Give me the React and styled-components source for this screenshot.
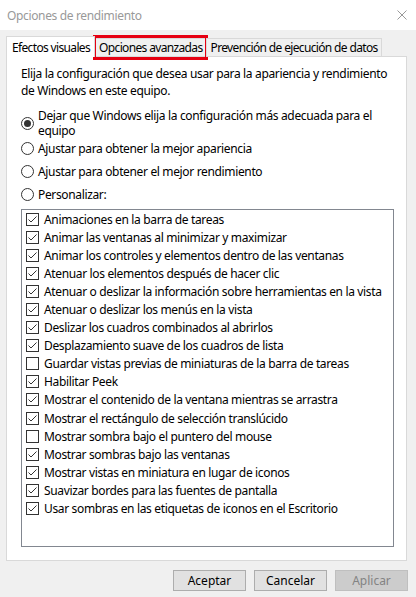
import React from 'react';
import styled, { createGlobalStyle } from 'styled-components';

const GlobalStyle = createGlobalStyle`
  html, body {
    margin: 0;
    padding: 0;
    background: #f0f0f0;
  }
  body {
    font-family: "Noto Sans", "Liberation Sans", sans-serif;
    font-size: 12px;
    letter-spacing: -0.35px;
    color: #000;
  }
`;

const Window = styled.div`
  width: 416px;
  height: 597px;
  display: flex;
  flex-direction: column;
  background: #f0f0f0;
  overflow: hidden;
`;

const TitleBar = styled.div`
  height: 30px;
  background: #fff;
  display: flex;
  align-items: center;
  justify-content: space-between;
  padding: 0 2px 0 7px;
  color: #999;
  font-size: 12px;
`;

const Close = styled.div`
  width: 24px;
  display: flex;
  justify-content: center;
`;

const Body = styled.div`
  padding: 7px 9px 0 6px;
  display: flex;
  flex-direction: column;
`;

const TabRow = styled.div`
  display: flex;
  align-items: flex-end;
  height: 20px;
  margin-bottom: -1px;
  position: relative;
  z-index: 1;
`;

const Tab = styled.div`
  position: relative;
  box-sizing: border-box;
  height: ${({ $active }) => ($active ? '21px' : '19px')};
  padding: ${({ $active }) => ($active ? '0 4px 0 5px' : '0 3px 0 4px')};
  background: ${({ $active }) => ($active ? '#fff' : '#f0f0f0')};
  border: 1px solid #d9d9d9;
  border-bottom: ${({ $active }) => ($active ? 'none' : '1px solid #d9d9d9')};
  margin-left: ${({ $active }) => ($active ? '0' : '-1px')};
  display: flex;
  align-items: center;
  white-space: nowrap;
  letter-spacing: -0.65px;
  z-index: ${({ $active }) => ($active ? 2 : 1)};
  ${({ $marked }) =>
    $marked &&
    `
    &::after {
      content: '';
      position: absolute;
      left: -2px;
      right: -2px;
      top: -4px;
      bottom: -4px;
      border: 3px solid #e60012;
      z-index: 3;
    }
  `}
`;

const Panel = styled.div`
  box-sizing: border-box;
  width: 401px;
  height: 505px;
  background: #fff;
  border: 1px solid #d9d9d9;
  padding: 8px 13px 0 14px;
  display: flex;
  flex-direction: column;
`;

const Intro = styled.p`
  margin: 0;
  line-height: 17px;
`;

const RadioGroup = styled.div`
  display: flex;
  flex-direction: column;
  margin-top: 9px;
`;

const RadioRow = styled.label`
  display: flex;
  align-items: center;
  line-height: 15px;
  white-space: pre-line;
  margin-top: ${({ $space }) => $space}px;
`;

const RadioCircle = styled.span`
  flex: none;
  box-sizing: border-box;
  width: 13px;
  height: 13px;
  border-radius: 50%;
  border: 1px solid #333;
  margin-right: 4px;
  display: flex;
  align-items: center;
  justify-content: center;
  &::after {
    content: '';
    display: ${({ $checked }) => ($checked ? 'block' : 'none')};
    width: 7px;
    height: 7px;
    border-radius: 50%;
    background: #333;
  }
`;

const ListBox = styled.div`
  box-sizing: border-box;
  margin-top: 7px;
  width: 373px;
  height: 338px;
  border: 1px solid #828790;
  padding: 0 4px;
  display: flex;
  flex-direction: column;
`;

const CheckRow = styled.div`
  display: flex;
  align-items: center;
  height: 18.1px;
  white-space: nowrap;
`;

const Box = styled.span`
  flex: none;
  box-sizing: border-box;
  width: 13px;
  height: 13px;
  border: 1px solid #333;
  margin-right: 5px;
  display: flex;
  align-items: center;
  justify-content: center;
`;

const Footer = styled.div`
  display: flex;
  justify-content: flex-end;
  gap: 8px;
  padding-top: 9px;
  margin-right: -1px;
`;

const Button = styled.button`
  box-sizing: border-box;
  width: 73px;
  height: 21px;
  font: inherit;
  font-size: 12px;
  padding: 0;
  background: ${({ disabled }) => (disabled ? '#cccccc' : '#e1e1e1')};
  border: 1px solid ${({ disabled }) => (disabled ? '#bfbfbf' : '#adadad')};
  color: ${({ disabled }) => (disabled ? '#838383' : '#000')};
`;

const options = [
  ['Animaciones en la barra de tareas', true],
  ['Animar las ventanas al minimizar y maximizar', true],
  ['Animar los controles y elementos dentro de las ventanas', true],
  ['Atenuar los elementos después de hacer clic', true],
  ['Atenuar o deslizar la información sobre herramientas en la vista', true],
  ['Atenuar o deslizar los menús en la vista', true],
  ['Deslizar los cuadros combinados al abrirlos', true],
  ['Desplazamiento suave de los cuadros de lista', true],
  ['Guardar vistas previas de miniaturas de la barra de tareas', false],
  ['Habilitar Peek', true],
  ['Mostrar el contenido de la ventana mientras se arrastra', true],
  ['Mostrar el rectángulo de selección translúcido', true],
  ['Mostrar sombra bajo el puntero del mouse', false],
  ['Mostrar sombras bajo las ventanas', true],
  ['Mostrar vistas en miniatura en lugar de iconos', true],
  ['Suavizar bordes para las fuentes de pantalla', true],
  ['Usar sombras en las etiquetas de iconos en el Escritorio', true],
];

const radios = [
  ['Dejar que Windows elija la configuración más adecuada para el\nequipo', true, 0],
  ['Ajustar para obtener la mejor apariencia', false, 3],
  ['Ajustar para obtener el mejor rendimiento', false, 8],
  ['Personalizar:', false, 8],
];

const Check = ({ checked }) => (
  <Box>
    {checked && (
      <svg width="11" height="11" viewBox="0 0 11 11">
        <path d="M1.5 5.5 L4 8 L9.5 2.5" fill="none" stroke="#333" strokeWidth="1" />
      </svg>
    )}
  </Box>
);

export default function App() {
  return (
    <Window>
      <GlobalStyle />
      <TitleBar>
        <span>Opciones de rendimiento</span>
        <Close>
          <svg width="10" height="10" viewBox="0 0 10 10">
            <path d="M0.5 0.5 L9.5 9.5 M9.5 0.5 L0.5 9.5" stroke="#999" strokeWidth="1" />
          </svg>
        </Close>
      </TitleBar>
      <Body>
        <TabRow>
          <Tab $active>Efectos visuales</Tab>
          <Tab $marked>Opciones avanzadas</Tab>
          <Tab>Prevención de ejecución de datos</Tab>
        </TabRow>
        <Panel>
          <Intro>
            Elija la configuración que desea usar para la apariencia y rendimiento de Windows en
            este equipo.
          </Intro>
          <RadioGroup>
            {radios.map(([label, checked, space]) => (
              <RadioRow key={label} $space={space}>
                <RadioCircle $checked={checked} />
                <span>{label}</span>
              </RadioRow>
            ))}
          </RadioGroup>
          <ListBox>
            {options.map(([label, checked]) => (
              <CheckRow key={label}>
                <Check checked={checked} />
                <span>{label}</span>
              </CheckRow>
            ))}
          </ListBox>
        </Panel>
        <Footer>
          <Button>Aceptar</Button>
          <Button>Cancelar</Button>
          <Button disabled>Aplicar</Button>
        </Footer>
      </Body>
    </Window>
  );
}
